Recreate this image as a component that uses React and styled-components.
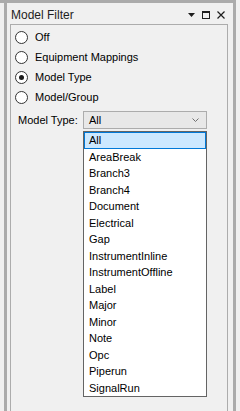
import styled, { createGlobalStyle } from 'styled-components'

const GlobalStyle = createGlobalStyle`
  html, body {
    margin: 0;
    padding: 0;
    background: #f0f0f0;
  }
  body {
    font-family: "Liberation Sans", Arial, sans-serif;
    font-size: 11px;
    color: #000;
  }
`

const models = [
  'All', 'AreaBreak', 'Branch3', 'Branch4', 'Document', 'Electrical', 'Gap',
  'InstrumentInline', 'InstrumentOffline', 'Label', 'Major', 'Minor', 'Note',
  'Opc', 'Piperun', 'SignalRun',
]

const options = [
  { label: 'Off', checked: false },
  { label: 'Equipment Mappings', checked: false },
  { label: 'Model Type', checked: true },
  { label: 'Model/Group', checked: false },
]

export default function App() {
  return (
    <Screen>
      <GlobalStyle />
      <Frame>
        <TitleBar>
          <Title>Model Filter</Title>
          <TitleButtons>
            <svg width="7" height="4" viewBox="0 0 7 4">
              <path d="M0 0h7L3.5 4z" fill="#1e1e1e" />
            </svg>
            <svg width="8" height="8" viewBox="0 0 8 8">
              <rect x="0.5" y="0.5" width="7" height="7" fill="none" stroke="#1e1e1e" />
              <rect x="0.5" y="0.5" width="7" height="1.5" fill="#1e1e1e" />
            </svg>
            <svg width="8" height="8" viewBox="0 0 8 8">
              <path d="M0.5 0.5l7 7M7.5 0.5l-7 7" stroke="#1e1e1e" strokeWidth="1.2" />
            </svg>
          </TitleButtons>
        </TitleBar>
        <Panel>
          {options.map((o) => (
            <RadioRow key={o.label}>
              <Radio $checked={o.checked} />
              <span>{o.label}</span>
            </RadioRow>
          ))}
          <FilterRow>
            <FieldLabel>Model Type:</FieldLabel>
            <ComboWrap>
              <Combo>
                <span>All</span>
                <svg width="7" height="4" viewBox="0 0 7 4">
                  <path d="M0.5 0.5L3.5 3.5L6.5 0.5" fill="none" stroke="#707070" />
                </svg>
              </Combo>
              <DropList>
                {models.map((m, i) => (
                  <Item key={m} $selected={i === 0}>{m}</Item>
                ))}
              </DropList>
            </ComboWrap>
          </FilterRow>
        </Panel>
      </Frame>
    </Screen>
  )
}

const Screen = styled.div`
  width: 236px;
  height: 411px;
  border-top: 3px solid #ababab;
  box-sizing: border-box;
  overflow: hidden;
`

const Frame = styled.div`
  margin-left: 4px;
  height: 100%;
  border-left: 3px solid #ababab;
  border-right: 3px solid #ababab;
  display: flex;
  flex-direction: column;
`

const TitleBar = styled.div`
  height: 21px;
  display: flex;
  align-items: center;
  justify-content: space-between;
  padding: 0 8px 0 4px;
`

const Title = styled.span`
  font-size: 12px;
  color: #1e1e1e;
  padding-top: 2px;
`

const TitleButtons = styled.div`
  display: flex;
  align-items: center;
  gap: 7px;
  padding-top: 2px;
`

const Panel = styled.div`
  flex: 1;
  margin: 0 5px 0 3px;
  border: 1px solid #acacac;
  border-bottom: none;
  padding: 2px 0 0 4px;
  display: flex;
  flex-direction: column;
`

const RadioRow = styled.div`
  height: 20px;
  display: flex;
  align-items: center;
  gap: 7px;
`

const Radio = styled.span`
  width: 13px;
  height: 13px;
  box-sizing: border-box;
  border-radius: 50%;
  border: 1px solid #333;
  background: #fff;
  display: flex;
  align-items: center;
  justify-content: center;

  &::after {
    content: '';
    display: ${(p) => (p.$checked ? 'block' : 'none')};
    width: 5px;
    height: 5px;
    border-radius: 50%;
    background: #1a1a1a;
  }
`

const FilterRow = styled.div`
  margin-top: 4px;
  padding-left: 3px;
  display: flex;
  align-items: center;
  gap: 4px;
`

const FieldLabel = styled.span`
  width: 61px;
`

const ComboWrap = styled.div`
  position: relative;
  width: 124px;
`

const Combo = styled.div`
  height: 18px;
  box-sizing: border-box;
  border: 1px solid #acacac;
  background: #e8e8e8;
  display: flex;
  align-items: center;
  justify-content: space-between;
  padding: 0 7px 0 5px;
`

const DropList = styled.div`
  position: absolute;
  top: 20px;
  left: 0;
  width: 124px;
  box-sizing: border-box;
  border: 1px solid #646464;
  background: #fff;
  padding-bottom: 0;
`

const Item = styled.div`
  height: 16.5px;
  line-height: 14.5px;
  box-sizing: border-box;
  padding-left: 4px;
  border: 1px solid ${(p) => (p.$selected ? '#0078d7' : 'transparent')};
  background: ${(p) => (p.$selected ? '#cce8ff' : 'transparent')};
  white-space: nowrap;
`
